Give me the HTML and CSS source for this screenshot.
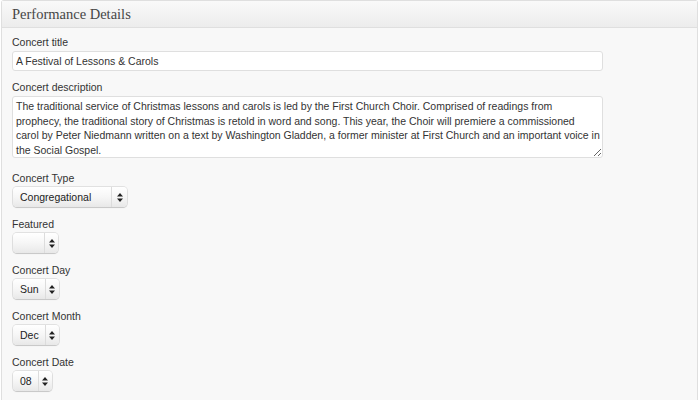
FILE: index.html
```html
<!DOCTYPE html>
<html>
<head>
<meta charset="utf-8">
<link rel="stylesheet" href="styles.css">
</head>
<body>
<div class="panel">
  <div class="panel-head"><h3 class="panel-title">Performance Details</h3></div>
  <div class="panel-body">
    <div class="field field-text">
      <label class="label">Concert title</label>
      <input class="text-input" type="text" value="A Festival of Lessons &amp; Carols">
    </div>
    <div class="field field-area">
      <label class="label">Concert description</label>
      <textarea class="text-area">The traditional service of Christmas lessons and carols is led by the First Church Choir. Comprised of readings from
prophecy, the traditional story of Christmas is retold in word and song. This year, the Choir will premiere a commissioned
carol by Peter Niedmann written on a text by Washington Gladden, a former minister at First Church and an important voice in
the Social Gospel.</textarea>
    </div>
    <div class="field field-select">
      <label class="label">Concert Type</label>
      <div class="select select-type"><span class="select-value">Congregational</span><span class="select-arrows"><svg width="6" height="9" viewBox="0 0 6 9"><path d="M3 0L6 3.5H0Z M3 9L6 5.5H0Z" fill="#222"/></svg></span></div>
    </div>
    <div class="field field-select">
      <label class="label">Featured</label>
      <div class="select select-featured"><span class="select-value"></span><span class="select-arrows"><svg width="6" height="9" viewBox="0 0 6 9"><path d="M3 0L6 3.5H0Z M3 9L6 5.5H0Z" fill="#222"/></svg></span></div>
    </div>
    <div class="field field-select">
      <label class="label">Concert Day</label>
      <div class="select"><span class="select-value">Sun</span><span class="select-arrows"><svg width="6" height="9" viewBox="0 0 6 9"><path d="M3 0L6 3.5H0Z M3 9L6 5.5H0Z" fill="#222"/></svg></span></div>
    </div>
    <div class="field field-select">
      <label class="label">Concert Month</label>
      <div class="select"><span class="select-value">Dec</span><span class="select-arrows"><svg width="6" height="9" viewBox="0 0 6 9"><path d="M3 0L6 3.5H0Z M3 9L6 5.5H0Z" fill="#222"/></svg></span></div>
    </div>
    <div class="field field-select field-last">
      <label class="label">Concert Date</label>
      <div class="select"><span class="select-value">08</span><span class="select-arrows"><svg width="6" height="9" viewBox="0 0 6 9"><path d="M3 0L6 3.5H0Z M3 9L6 5.5H0Z" fill="#222"/></svg></span></div>
    </div>
  </div>
</div>
</body>
</html>
```
FILE: styles.css
```css
html, body {
  margin: 0;
  padding: 0;
  background: #ffffff;
}
body {
  padding: 0 2px 0 1px;
  font-family: "Liberation Sans", Arial, sans-serif;
  font-size: 10.5px;
  color: #333333;
  height: 400px;
  box-sizing: border-box;
  overflow: hidden;
}
.panel {
  box-sizing: border-box;
  border: 1px solid #dfdfdf;
  border-bottom: none;
  border-radius: 3px 3px 0 0;
  background: #f8f8f8;
  height: 400px;
}
.panel-head {
  height: 26px;
  border-bottom: 1px solid #dfdfdf;
  background: linear-gradient(to bottom, #f9f9f9, #ececec);
  display: flex;
  align-items: center;
  padding-left: 10px;
}
.panel-title {
  margin: 0;
  font-family: "Liberation Serif", "Times New Roman", serif;
  font-weight: normal;
  font-size: 14.5px;
  color: #464646;
}
.panel-body {
  padding: 7px 0 0 10px;
}
.field {
  display: flex;
  flex-direction: column;
  align-items: flex-start;
}
.label {
  display: block;
  line-height: 15px;
  margin-bottom: 1px;
}
.field-text {
  margin-bottom: 9px;
}
.field-area {
  margin-bottom: 13px;
}
.field-select {
  margin-bottom: 10px;
}
.field-last {
  margin-bottom: 0;
}
.text-input {
  box-sizing: border-box;
  width: 591px;
  height: 20px;
  margin: 0;
  border: 1px solid #dfdfdf;
  border-radius: 3px;
  background: #ffffff;
  padding: 0 3px;
  font-family: "Liberation Sans", Arial, sans-serif;
  font-size: 10.5px;
  color: #333333;
  outline: none;
}
.text-area {
  box-sizing: border-box;
  width: 591px;
  height: 62px;
  margin: 0;
  border: 1px solid #dfdfdf;
  border-radius: 3px;
  background: #ffffff;
  padding: 2px 3px 1px;
  font-family: "Liberation Sans", Arial, sans-serif;
  font-size: 10.5px;
  line-height: 14.5px;
  color: #333333;
  white-space: pre;
  overflow: hidden;
  outline: none;
}
.select {
  box-sizing: border-box;
  display: flex;
  align-items: center;
  height: 20px;
  margin-left: 1px;
  border-radius: 4px;
  background: linear-gradient(to bottom, #ffffff 0%, #f6f6f6 50%, #e8e8e8 100%);
  box-shadow: 0 0 0 1px rgba(0, 0, 0, 0.09), 0 1px 1px rgba(0, 0, 0, 0.12);
  color: #222222;
}
.select-value {
  padding: 0 6px 0 7px;
  line-height: 20px;
  font-size: 10.5px;
}
.select-type .select-value {
  width: 85px;
}
.select-featured .select-value {
  width: 31px;
  box-sizing: border-box;
}
.select-arrows {
  box-sizing: border-box;
  width: 14px;
  height: 20px;
  border-left: 1px solid #dcdcdc;
  display: flex;
  align-items: center;
  justify-content: center;
}
.select-type .select-arrows {
  width: 16px;
}
.select-arrows svg {
  display: block;
}
```
